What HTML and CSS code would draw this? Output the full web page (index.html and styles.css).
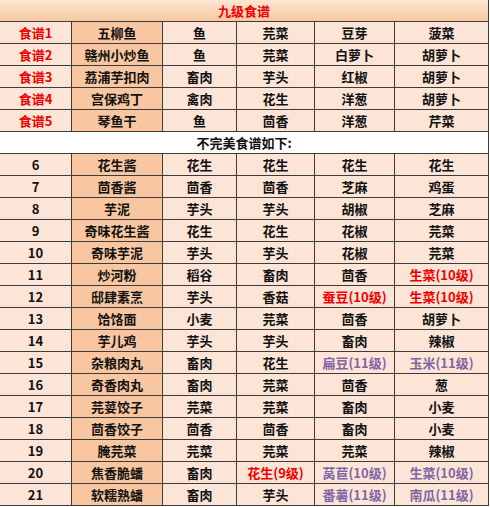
FILE: index.html
```html
<!DOCTYPE html>
<html lang="zh">
<head>
<meta charset="utf-8">
<link rel="stylesheet" href="styles.css">
</head>
<body>
<div class="sheet">
  <div class="cell title span red">九级食谱</div>

  <div class="cell idx red">食谱1</div><div class="cell dish">五柳鱼</div><div class="cell">鱼</div><div class="cell">芫菜</div><div class="cell">豆芽</div><div class="cell">菠菜</div>
  <div class="cell idx red">食谱2</div><div class="cell dish">赣州小炒鱼</div><div class="cell">鱼</div><div class="cell">芫菜</div><div class="cell">白萝卜</div><div class="cell">胡萝卜</div>
  <div class="cell idx red">食谱3</div><div class="cell dish">荔浦芋扣肉</div><div class="cell">畜肉</div><div class="cell">芋头</div><div class="cell">红椒</div><div class="cell">胡萝卜</div>
  <div class="cell idx red">食谱4</div><div class="cell dish">宫保鸡丁</div><div class="cell">禽肉</div><div class="cell">花生</div><div class="cell">洋葱</div><div class="cell">胡萝卜</div>
  <div class="cell idx red">食谱5</div><div class="cell dish">琴鱼干</div><div class="cell">鱼</div><div class="cell">茴香</div><div class="cell">洋葱</div><div class="cell">芹菜</div>

  <div class="cell sub span">不完美食谱如下:</div>

  <div class="cell idx">6</div><div class="cell dish">花生酱</div><div class="cell">花生</div><div class="cell">花生</div><div class="cell">花生</div><div class="cell">花生</div>
  <div class="cell idx">7</div><div class="cell dish">茴香酱</div><div class="cell">茴香</div><div class="cell">茴香</div><div class="cell">芝麻</div><div class="cell">鸡蛋</div>
  <div class="cell idx">8</div><div class="cell dish">芋泥</div><div class="cell">芋头</div><div class="cell">芋头</div><div class="cell">胡椒</div><div class="cell">芝麻</div>
  <div class="cell idx">9</div><div class="cell dish">奇味花生酱</div><div class="cell">花生</div><div class="cell">花生</div><div class="cell">花椒</div><div class="cell">芫菜</div>
  <div class="cell idx">10</div><div class="cell dish">奇味芋泥</div><div class="cell">芋头</div><div class="cell">芋头</div><div class="cell">花椒</div><div class="cell">芫菜</div>
  <div class="cell idx">11</div><div class="cell dish">炒河粉</div><div class="cell">稻谷</div><div class="cell">畜肉</div><div class="cell">茴香</div><div class="cell red">生菜(10级)</div>
  <div class="cell idx">12</div><div class="cell dish">邸肆素烹</div><div class="cell">芋头</div><div class="cell">香菇</div><div class="cell red">蚕豆(10级)</div><div class="cell red">生菜(10级)</div>
  <div class="cell idx">13</div><div class="cell dish">饸饹面</div><div class="cell">小麦</div><div class="cell">芫菜</div><div class="cell">茴香</div><div class="cell">胡萝卜</div>
  <div class="cell idx">14</div><div class="cell dish">芋儿鸡</div><div class="cell">芋头</div><div class="cell">芋头</div><div class="cell">畜肉</div><div class="cell">辣椒</div>
  <div class="cell idx">15</div><div class="cell dish">杂粮肉丸</div><div class="cell">畜肉</div><div class="cell">花生</div><div class="cell purple">扁豆(11级)</div><div class="cell purple">玉米(11级)</div>
  <div class="cell idx">16</div><div class="cell dish">奇香肉丸</div><div class="cell">畜肉</div><div class="cell">芫菜</div><div class="cell">茴香</div><div class="cell">葱</div>
  <div class="cell idx">17</div><div class="cell dish">芫荽饺子</div><div class="cell">芫菜</div><div class="cell">芫菜</div><div class="cell">畜肉</div><div class="cell">小麦</div>
  <div class="cell idx">18</div><div class="cell dish">茴香饺子</div><div class="cell">茴香</div><div class="cell">茴香</div><div class="cell">畜肉</div><div class="cell">小麦</div>
  <div class="cell idx">19</div><div class="cell dish">腌芫菜</div><div class="cell">芫菜</div><div class="cell">芫菜</div><div class="cell">芫菜</div><div class="cell">辣椒</div>
  <div class="cell idx">20</div><div class="cell dish">焦香脆蟠</div><div class="cell">畜肉</div><div class="cell red">花生(9级)</div><div class="cell purple">莴苣(10级)</div><div class="cell purple">生菜(10级)</div>
  <div class="cell idx">21</div><div class="cell dish">软糯熟蟠</div><div class="cell">畜肉</div><div class="cell">芋头</div><div class="cell purple">番薯(11级)</div><div class="cell purple">南瓜(11级)</div>
</div>
</body>
</html>
```

FILE: styles.css
```css
html, body {
  margin: 0;
  padding: 0;
  background: #ffffff;
}

.sheet {
  display: grid;
  grid-template-columns: 72px 91px 74px 78px 80px 94px;
  grid-auto-rows: 22px;
  width: 489px;
  font-family: "Noto Sans CJK SC", "Microsoft YaHei", sans-serif;
  font-weight: bold;
  font-size: 13px;
  color: #111111;
}

.cell {
  box-sizing: border-box;
  border-right: 1px solid #3c3c3c;
  border-bottom: 1px solid #3c3c3c;
  background: #fce4d6;
  display: flex;
  align-items: center;
  justify-content: center;
  line-height: 1;
  white-space: nowrap;
}

.span {
  grid-column: 1 / -1;
}

.title {
  background: linear-gradient(#fde6d3, #f8c8a0);
  font-size: 13px;
}

.sub {
  background: #ffffff;
}

.dish {
  background: #f8c6a0;
}

.red {
  color: #ee0000;
}

.purple {
  color: #8066a6;
}
```
